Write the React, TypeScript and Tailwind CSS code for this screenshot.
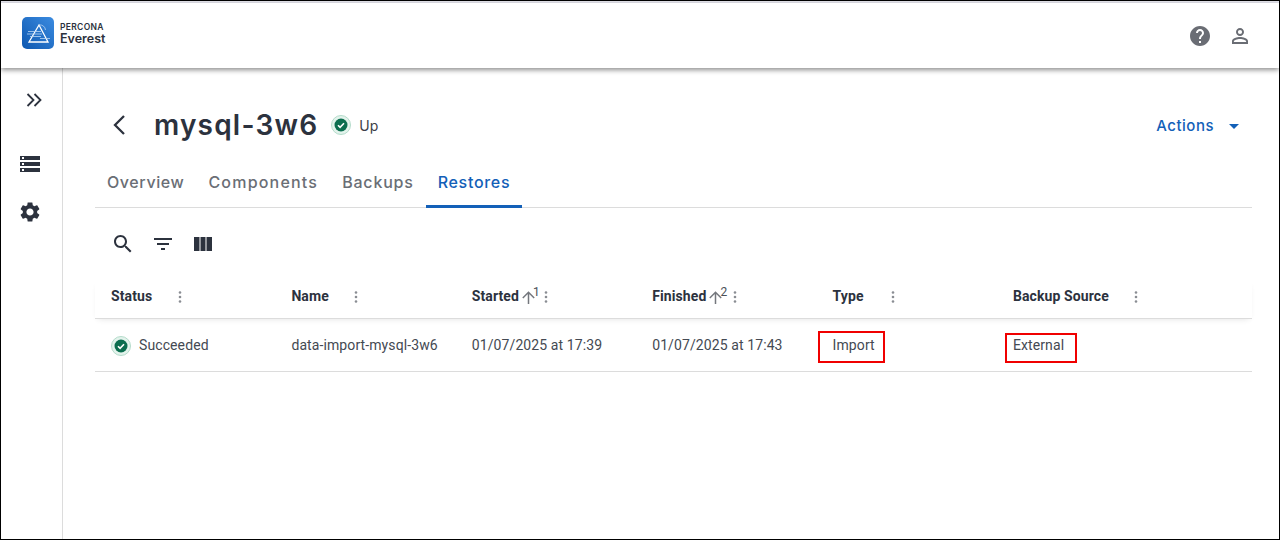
import React from "react";

const roboto = { fontFamily: "Roboto, sans-serif" };
const inter = { fontFamily: "Inter, sans-serif" };

function StatusIcon() {
  return (
    <span className="flex h-5 w-5 items-center justify-center rounded-full border border-[#b5dccb] bg-[#e3f3ec]">
      <svg width="14" height="14" viewBox="0 0 14 14">
        <circle cx="7" cy="7" r="6.5" fill="#0b6e4f" />
        <path d="M4 7.2l2.1 2.1L10 5.3" fill="none" stroke="#fff" strokeWidth="1.6" />
      </svg>
    </span>
  );
}

function Dots() {
  return (
    <svg width="4" height="14" viewBox="0 0 4 14" className="block shrink-0">
      <circle cx="2" cy="2.5" r="1.3" fill="#8a8d93" />
      <circle cx="2" cy="7" r="1.3" fill="#8a8d93" />
      <circle cx="2" cy="11.5" r="1.3" fill="#8a8d93" />
    </svg>
  );
}

function SortArrow({ n }: { n: string }) {
  return (
    <span className="ml-[3px] flex items-start">
      <svg width="13" height="13" viewBox="0 0 13 13" className="mt-[1px]">
        <path d="M6.500 13V1.300M.8 7L6.500 1.300 12.200 7" fill="none" stroke="#74777d" strokeWidth="1.500" />
      </svg>
      <span className="-ml-[2px] -mt-[5px] text-[12px] font-normal leading-[14px] text-[#4b5058]">{n}</span>
    </span>
  );
}

function HeaderCell({ label, sort, gap }: { label: string; sort?: string; gap: string }) {
  return (
    <div className="flex items-center pl-4 text-[14px] font-bold tracking-[0.1px] text-[#2c323e]">
      <span>{label}</span>
      {sort && <SortArrow n={sort} />}
      <span className={gap}>
        <Dots />
      </span>
    </div>
  );
}

export default function App() {
  return (
    <div className="flex h-[540px] w-[1280px] flex-col overflow-hidden border border-black bg-white" style={roboto}>
      <div className="h-[2px] shrink-0 bg-[#e6e6ee]" />
      <header className="z-10 flex h-[65px] shrink-0 items-center justify-between bg-white pl-[21px] pr-[27px] shadow-[0_2px_5px_rgba(0,0,0,0.45)]">
        <div className="-mt-[5px] flex items-center gap-[5px]">
          <svg width="32" height="32" viewBox="0 0 32 32">
            <defs>
              <linearGradient id="logo" x1="1" y1="0" x2="0" y2="1">
                <stop offset="0" stopColor="#3b8be0" />
                <stop offset="1" stopColor="#0e58b0" />
              </linearGradient>
            </defs>
            <rect width="32" height="32" rx="5" fill="url(#logo)" />
            <path d="M7 25L17 8l9 17z" fill="none" stroke="#fff" strokeWidth="1.300" />
            <path d="M17 8a5.500 5.500 0 0 1 6.500 5M6 14.500h13M5 17h15M8 19.500h11M18 21.500h10" fill="none" stroke="#b9d6f5" strokeWidth="0.800" />
          </svg>
          <div className="flex flex-col pl-[1px] text-[#2c323e]" style={inter}>
            <span className="text-[8.500px] font-semibold leading-[10px] tracking-[0.3px]">PERCONA</span>
            <span className="text-[12.500px] font-semibold leading-[13px]">Everest</span>
          </div>
        </div>
        <div className="flex items-center gap-4">
          <svg width="24" height="24" viewBox="0 0 24 24" fill="#6a6d74">
            <path d="M12 2C6.480 2 2 6.480 2 12s4.480 10 10 10 10-4.480 10-10S17.520 2 12 2zm1 17h-2v-2h2v2zm2.070-7.750l-.9.920C13.450 12.900 13 13.500 13 15h-2v-.500c0-1.100.450-2.100 1.170-2.830l1.240-1.260c.370-.360.590-.860.590-1.410 0-1.100-.900-2-2-2s-2 .900-2 2H8c0-2.210 1.790-4 4-4s4 1.790 4 4c0 .880-.360 1.680-.930 2.250z" />
          </svg>
          <svg width="24" height="24" viewBox="0 0 24 24" fill="#6a6d74">
            <path d="M12 5.900a2.100 2.100 0 1 1 0 4.200 2.100 2.100 0 0 1 0-4.200m0 9c2.970 0 6.100 1.460 6.100 2.100v1.100H5.900V17c0-.640 3.130-2.100 6.100-2.100M12 4C9.790 4 8 5.790 8 8s1.790 4 4 4 4-1.790 4-4-1.790-4-4-4zm0 9c-2.670 0-8 1.340-8 4v3h16v-3c0-2.660-5.330-4-8-4z" />
          </svg>
        </div>
      </header>

      <div className="flex min-h-0 flex-1">
        <aside className="flex w-[62px] shrink-0 flex-col border-r border-[#dcdcdc] pt-5 text-[#2c323e]">
          <div className="flex h-6 justify-center pl-[5px]">
            <svg width="24" height="24" viewBox="0 0 24 24" fill="none" stroke="#2c323e" strokeWidth="1.800">
              <path d="M5.500 6l6 6-6 6M12.500 6l6 6-6 6" />
            </svg>
          </div>
          <div className="mt-10 flex h-6 justify-center pr-[3px]">
            <svg width="24" height="24" viewBox="0 0 24 24" fill="#2c323e">
              <path d="M2 20h20v-4H2v4zm2-3h2v2H4v-2zM2 4v4h20V4H2zm4 3H4V5h2v2zm-4 7h20v-4H2v4zm2-3h2v2H4v-2z" />
            </svg>
          </div>
          <div className="mt-6 flex h-6 justify-center pr-[3px]">
            <svg width="24" height="24" viewBox="0 0 24 24" fill="#2c323e">
              <path d="M19.140 12.940c.040-.300.060-.610.060-.940 0-.320-.020-.640-.070-.940l2.030-1.580c.180-.140.230-.410.120-.610l-1.920-3.320c-.120-.220-.370-.290-.590-.220l-2.390.960c-.500-.380-1.030-.700-1.620-.940l-.360-2.540c-.040-.240-.240-.410-.480-.410h-3.840c-.240 0-.430.170-.470.410l-.360 2.540c-.590.240-1.130.570-1.620.940l-2.390-.960c-.220-.080-.470 0-.590.220L2.740 8.870c-.120.210-.080.470.120.610l2.030 1.580c-.050.300-.090.630-.090.940s.020.640.07.940l-2.030 1.580c-.180.140-.230.410-.120.610l1.920 3.320c.120.220.370.290.590.220l2.390-.960c.500.380 1.030.700 1.620.940l.360 2.540c.050.240.240.410.480.410h3.840c.240 0 .440-.170.470-.410l.360-2.540c.590-.240 1.130-.560 1.620-.940l2.390.960c.220.080.470 0 .590-.220l1.920-3.320c.120-.220.070-.470-.120-.610l-2.010-1.580zM12 15.600c-1.980 0-3.600-1.620-3.600-3.600s1.620-3.600 3.600-3.600 3.600 1.620 3.600 3.600-1.620 3.600-3.600 3.600z" />
            </svg>
          </div>
        </aside>

        <main className="min-w-0 flex-1 pl-8 pr-[27px]">
          <div className="flex h-[85px] items-center pt-[29px]">
            <svg width="24" height="24" viewBox="0 0 24 24" fill="none" stroke="#2c323e" strokeWidth="2.300" className="ml-[13px] shrink-0">
              <path d="M17 3l-9 9 9 9" transform="translate(-1 0)" />
            </svg>
            <h1 className="ml-[22px] text-[28px] font-semibold leading-none tracking-[1.2px] text-[#2c323e]" style={inter}>
              mysql-3w6
            </h1>
            <span className="ml-[13px]">
              <StatusIcon />
            </span>
            <span className="ml-[8px] text-[14px] text-[#3c4048]" style={inter}>Up</span>
            <div className="ml-auto flex items-center pr-[13px] pt-[2px] text-[15px] font-medium tracking-[0.5px] text-[#1360b8]" style={inter}>
              Actions
              <svg width="10" height="5" viewBox="0 0 10 5" className="ml-[15px]">
                <path d="M0 0h10L5 5z" fill="#1360b8" />
              </svg>
            </div>
          </div>

          <nav className="flex h-[55px] items-stretch border-b border-[#dcdcdc] text-[16px] font-medium text-[#6a6e75]" style={inter}>
            <span className="flex items-center px-3 pt-1 tracking-[0.6px]">Overview</span>
            <span className="flex items-center px-3 pt-1 tracking-[1.2px]">Components</span>
            <span className="flex items-center px-3 pt-1 tracking-[0.8px]">Backups</span>
            <span className="-mb-px flex items-center border-b-[3px] border-[#1360b8] px-3 pt-[5px] tracking-[0.7px] text-[#1360b8]">Restores</span>
          </nav>

          <div className="flex h-[72px] items-center gap-4 pl-[16px]">
            <svg width="24" height="24" viewBox="0 0 24 24" fill="#2c323e">
              <path d="M15.500 14h-.790l-.280-.270C15.410 12.590 16 11.110 16 9.500 16 5.910 13.090 3 9.500 3S3 5.910 3 9.500 5.910 16 9.500 16c1.610 0 3.090-.590 4.230-1.570l.270.280v.790l5 4.990L20.490 19l-4.990-5zm-6 0C7.010 14 5 11.990 5 9.500S7.010 5 9.500 5 14 7.010 14 9.500 11.990 14 9.500 14z" />
            </svg>
            <svg width="24" height="24" viewBox="0 0 24 24" fill="#2c323e">
              <path d="M10 18h4v-2h-4v2zM3 6v2h18V6H3zm3 7h12v-2H6v2z" />
            </svg>
            <svg width="24" height="24" viewBox="0 0 24 24" fill="#2c323e">
              <path d="M3 5h5.500v14H3zM9.500 5h5v14h-5zM15.500 5H21v14h-5.500z" />
            </svg>
          </div>

          <div className="grid grid-cols-[180.400px_180.400px_180.400px_180.400px_180.400px_1fr]">
            <div className="col-span-6 grid h-[39px] grid-cols-subgrid border-b border-[#dcdcdc] pb-[6px] pt-px shadow-[0_3px_6px_-3px_rgba(0,0,0,0.12)]">
              <HeaderCell label="Status" gap="ml-[26px]" />
              <HeaderCell label="Name" gap="ml-[25px]" />
              <HeaderCell label="Started" sort="1" gap="ml-[4px]" />
              <HeaderCell label="Finished" sort="2" gap="ml-[6px]" />
              <HeaderCell label="Type" gap="ml-[27px]" />
              <HeaderCell label="Backup Source" gap="ml-[25px]" />
            </div>
            <div className="col-span-6 grid h-[53px] grid-cols-subgrid items-center border-b border-[#dcdcdc] pt-px text-[14px] tracking-[0.1px] text-[#444952]">
              <div className="flex items-center gap-2 pl-4">
                <StatusIcon />
                <span>Succeeded</span>
              </div>
              <div className="pl-4">data-import-mysql-3w6</div>
              <div className="pl-4">01/07/2025 at 17:39</div>
              <div className="pl-4">01/07/2025 at 17:43</div>
              <div className="relative pl-4">
                Import
                <span className="absolute left-[1px] top-[-4px] h-[32px] w-[67px] border-2 border-[#f00000]" />
              </div>
              <div className="relative pl-4">
                External
                <span className="absolute left-[8px] top-[-2px] h-[30px] w-[72px] border-2 border-[#f00000]" />
              </div>
            </div>
          </div>
        </main>
      </div>
    </div>
  );
}
